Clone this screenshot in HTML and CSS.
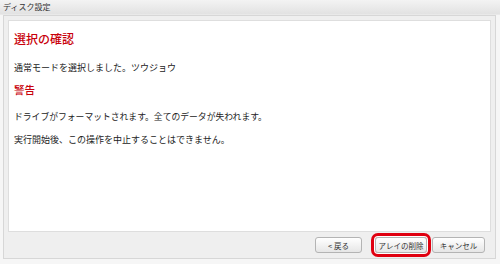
FILE: index.html
```html
<!DOCTYPE html>
<html lang="ja">
<head>
    <meta charset="UTF-8">
    <title>ディスク設定</title>
    <link rel="stylesheet" href="styles.css">
</head>
<body>
    <!-- Title bar -->
    <header class="titlebar">ディスク設定</header>

    <!-- Dialog panel -->
    <div class="panel">
        <div class="content">
            <h2 class="heading">選択の確認</h2>
            <p class="mode-line">通常モードを選択しました。ツウジョウ</p>
            <h3 class="warning">警告</h3>
            <p class="msg-first">ドライブがフォーマットされます。全てのデータが失われます。</p>
            <p class="msg-second">実行開始後、この操作を中止することはできません。</p>
        </div>
        <div class="footer">
            <button class="btn btn-back">&lt; 戻る</button>
            <button class="btn btn-marked">アレイの削除</button>
            <button class="btn">キャンセル</button>
        </div>
    </div>
</body>
</html>
```

FILE: styles.css
```css
* {
    margin: 0;
    padding: 0;
    box-sizing: border-box;
}

body {
    width: 500px;
    height: 264px;
    background-color: #f6f6f6;
    font-family: "Noto Sans CJK JP", "DejaVu Sans", sans-serif;
    color: #222;
    overflow: hidden;
}

.titlebar {
    height: 15px;
    line-height: 14px;
    padding-left: 3px;
    font-size: 8px;
    color: #333;
    background: linear-gradient(#f3f3f3, #e2e2e2);
    border-bottom: 1px solid #e9e9e9;
}

.panel {
    margin: 0 4px 0 3px;
    height: 244px;
    display: flex;
    flex-direction: column;
    background-color: #efefef;
    border: 1px solid #d7d7d7;
    padding: 4px 4px 0 4px;
}

.content {
    flex-grow: 1;
    background-color: #fff;
    border: 1px solid #dedede;
    padding: 10px 5px 0 5px;
}

.heading {
    font-size: 12px;
    line-height: 16px;
    font-weight: 500;
    color: #c8000a;
}

.mode-line {
    margin-top: 15px;
    font-size: 9px;
    line-height: 12px;
}

.warning {
    margin-top: 9px;
    font-size: 10.5px;
    line-height: 14px;
    font-weight: 500;
    color: #c8000a;
}

.msg-first {
    margin-top: 14px;
    font-size: 8.8px;
    line-height: 12px;
}

.msg-second {
    margin-top: 11px;
    font-size: 9px;
    line-height: 12px;
}

.footer {
    height: 26px;
    display: flex;
    justify-content: flex-end;
    align-items: center;
    gap: 5px;
    padding-right: 6px;
}

.btn {
    width: 53px;
    height: 16px;
    padding: 0;
    white-space: nowrap;
    text-align: center;
    font-family: inherit;
    font-size: 7.5px;
    color: #333;
    background: linear-gradient(#ffffff, #e6e6e6);
    border: 1px solid #b4b4b4;
    border-radius: 3px;
}

.btn-back {
    width: 47px;
    margin-right: 8px;
}

.btn-marked {
    width: 52px;
    box-shadow: 0 0 0 1px #fff, 0 0 0 4px #e00010;
}
```
